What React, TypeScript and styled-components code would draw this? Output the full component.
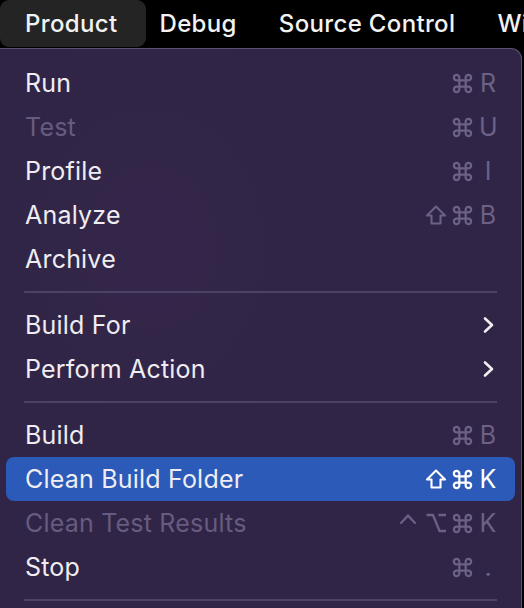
import React from "react";
import styled, { createGlobalStyle } from "styled-components";

const Global = createGlobalStyle`
  html, body { margin: 0; padding: 0; background: #000; }
  body { width: 524px; height: 608px; overflow: hidden; font-family: Inter, "Noto Sans", "DejaVu Sans", sans-serif; }
`;

const Page = styled.div`
  width: 524px;
  height: 608px;
  background: #000;
  display: flex;
  flex-direction: column;
  overflow: hidden;
`;

const MenuBar = styled.div`
  height: 48px;
  display: flex;
  align-items: flex-start;
  flex-shrink: 0;
  white-space: nowrap;
  & > :nth-child(2) {
    padding-left: 13px;
  }
`;

const BarItem = styled.div<{ $active?: boolean }>`
  height: 47px;
  display: flex;
  align-items: center;
  padding: ${(p) => (p.$active ? "0 29px 0 25px" : "0 21px")};
  background: ${(p) => (p.$active ? "#242424" : "transparent")};
  border-radius: 9px;
  color: #f2f2f2;
  font-size: 24px;
  font-weight: 500;
  letter-spacing: 0.35px;
`;

const Menu = styled.div`
  flex: 1;
  width: 522px;
  background: radial-gradient(ellipse 260px 320px at 150px 200px, #34264a 0%, #302546 70%);
  border-top: 1px solid #5c5270;
  border-right: 1px solid #5c5270;
  border-top-right-radius: 11px;
  padding: 12px 6px 0 6px;
  box-sizing: border-box;
  display: flex;
  flex-direction: column;
`;

const Row = styled.div<{ $active?: boolean; $disabled?: boolean }>`
  height: 44px;
  flex-shrink: 0;
  display: flex;
  align-items: center;
  justify-content: space-between;
  padding: 0 18px 0 19px;
  border-radius: 8px;
  background: ${(p) => (p.$active ? "#2c5ab8" : "transparent")};
  color: ${(p) => (p.$disabled ? "#675b7f" : "#efedf2")};
  font-size: 25px;
  font-weight: 400;
  letter-spacing: 0.2px;
`;

const Label = styled.span`
  white-space: nowrap;
`;

const Keys = styled.span<{ $active?: boolean }>`
  display: flex;
  gap: 7px;
  color: ${(p) => (p.$active ? "#ffffff" : "#6c6186")};
  align-items: center;
`;

const Letter = styled.span`
  width: 18px;
  text-align: center;
  font-size: 25px;
  font-weight: 400;
  letter-spacing: 0;
`;

const IconBox = styled.svg<{ $size?: number }>`
  width: ${(p) => p.$size ?? 20}px;
  height: ${(p) => p.$size ?? 20}px;
  display: block;
  overflow: visible;
`;

const Separator = styled.div`
  height: 22px;
  flex-shrink: 0;
  display: flex;
  align-items: center;
  padding: 0 18px;
  &::after {
    content: "";
    flex: 1;
    height: 2px;
    background: #4d4264;
  }
`;

const Chevron = () => (
  <svg width="14" height="18" viewBox="0 0 14 18" style={{ marginRight: 2 }}>
    <polyline points="4,2.5 11,9 4,15.5" fill="none" stroke="#efedf2" strokeWidth="2.6" strokeLinecap="round" strokeLinejoin="round" />
  </svg>
);

const ModIcon = ({ k }: { k: string }) => {
  const common = {
    fill: "none",
    stroke: "currentColor",
    strokeWidth: 2.3,
    strokeLinecap: "round" as const,
    strokeLinejoin: "round" as const,
  };
  if (k === "cmd")
    return (
      <IconBox $size={19} viewBox="3 3 18 18">
        <path {...common} strokeWidth={2.1} d="M15 6.5v11a2.6 2.6 0 1 0 2.5-2.5H6.5a2.6 2.6 0 1 0 2.5 2.5V6.5a2.6 2.6 0 1 0-2.5 2.5h11a2.6 2.6 0 1 0-2.5-2.5" />
      </IconBox>
    );
  if (k === "shift")
    return (
      <IconBox viewBox="0 0 20 20">
        <path {...common} strokeWidth={2.1} d="M10 1.5 L19 10.5 H14.5 V18.5 H5.5 V10.5 H1 Z" />
      </IconBox>
    );
  if (k === "opt")
    return (
      <IconBox viewBox="0 0 20 20">
        <path {...common} strokeLinecap="butt" d="M0.5 2 H7 L13.5 18 H20 M12.5 2 H20" />
      </IconBox>
    );
  return (
    <IconBox viewBox="0 0 20 20">
      <path {...common} d="M2 10 L9 2.5 L16 10" />
    </IconBox>
  );
};

type Item =
  | { sep: true }
  | { label: string; mods?: string[]; key?: string; disabled?: boolean; active?: boolean; sub?: boolean; sep?: false };

const items: Item[] = [
  { label: "Run", mods: ["cmd"], key: "R" },
  { label: "Test", mods: ["cmd"], key: "U", disabled: true },
  { label: "Profile", mods: ["cmd"], key: "I" },
  { label: "Analyze", mods: ["shift", "cmd"], key: "B" },
  { label: "Archive" },
  { sep: true },
  { label: "Build For", sub: true },
  { label: "Perform Action", sub: true },
  { sep: true },
  { label: "Build", mods: ["cmd"], key: "B" },
  { label: "Clean Build Folder", mods: ["shift", "cmd"], key: "K", active: true },
  { label: "Clean Test Results", mods: ["ctrl", "opt", "cmd"], key: "K", disabled: true },
  { label: "Stop", mods: ["cmd"], key: "." },
  { sep: true },
];

export default function App() {
  return (
    <Page>
      <Global />
      <MenuBar>
        <BarItem $active>Product</BarItem>
        <BarItem>Debug</BarItem>
        <BarItem>Source Control</BarItem>
        <BarItem>Window</BarItem>
      </MenuBar>
      <Menu>
        {items.map((it, i) =>
          it.sep ? (
            <Separator key={i} />
          ) : (
            <Row key={i} $active={it.active} $disabled={it.disabled}>
              <Label>{it.label}</Label>
              {it.sub ? (
                <Chevron />
              ) : it.key ? (
                <Keys $active={it.active}>
                  {it.mods!.map((m, j) => (
                    <ModIcon key={j} k={m} />
                  ))}
                  <Letter>{it.key}</Letter>
                </Keys>
              ) : null}
            </Row>
          )
        )}
      </Menu>
    </Page>
  );
}
